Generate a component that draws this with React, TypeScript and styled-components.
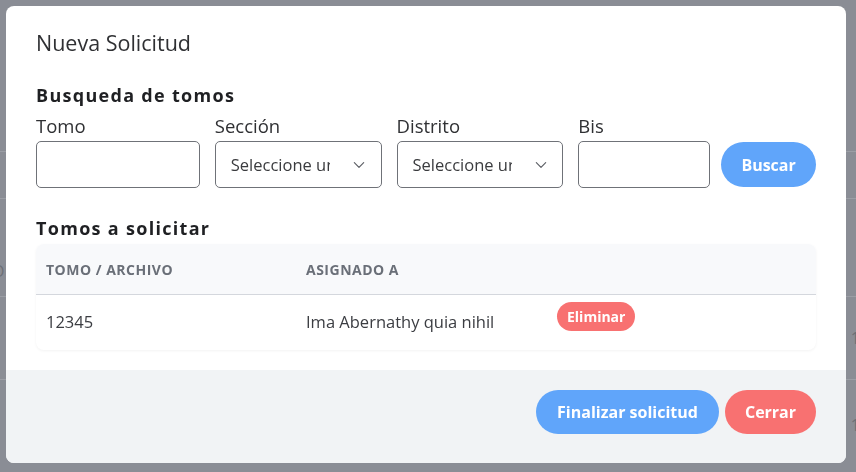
import React from "react";
import styled, { createGlobalStyle } from "styled-components";

const Global = createGlobalStyle`
  html, body { margin: 0; padding: 0; }
  body {
    background: #8a8d95;
    font-family: "Open Sans", "Noto Sans", sans-serif;
    width: 856px;
    height: 472px;
    overflow: hidden;
  }
  * { box-sizing: border-box; }
`;

const Page = styled.div`
  display: flex;
  flex-direction: column;
  padding-top: 151px;
`;

const PageRow = styled.div<{ $h: number; $pt?: number }>`
  height: ${(p) => p.$h}px;
  padding-top: ${(p) => p.$pt ?? 0}px;
  border-top: 1px solid #9b9ea5;
  display: flex;
  align-items: center;
  justify-content: space-between;
  color: #6c6f76;
  font-size: 16px;
`;

const EdgeText = styled.span<{ $side: "left" | "right" }>`
  margin-${(p) => p.$side}: ${(p) => (p.$side === "left" ? -8 : -4)}px;
`;

const Overlay = styled.div`
  position: fixed;
  inset: 0;
  padding: 6px;
  display: flex;
  align-items: flex-start;
`;

const Modal = styled.div`
  width: 840px;
  background: #ffffff;
  border-radius: 8px;
  overflow: hidden;
  display: flex;
  flex-direction: column;
`;

const Body = styled.div`
  padding: 23px 30px 20px;
  display: flex;
  flex-direction: column;
`;

const Title = styled.h2`
  margin: 0;
  font-size: 21.5px;
  line-height: 28px;
  font-weight: 400;
  color: #2f3033;
`;

const SectionHeading = styled.h3<{ $mt: number }>`
  margin: ${(p) => p.$mt}px 0 0;
  font-size: 18px;
  line-height: 24px;
  font-weight: 700;
  letter-spacing: 1.3px;
  color: #1f2023;
`;

const SearchRow = styled.div`
  margin-top: 7px;
  display: flex;
  align-items: flex-end;
  gap: 15px;
`;

const Field = styled.div<{ $w: number }>`
  width: ${(p) => p.$w}px;
  display: flex;
  flex-direction: column;
  gap: 3px;
`;

const Label = styled.label`
  font-size: 18.5px;
  line-height: 24px;
  color: #2f3033;
`;

const TextInput = styled.input`
  height: 47px;
  width: 100%;
  border: 1px solid #6f7278;
  border-radius: 5px;
  background: #fff;
  font: inherit;
  padding: 0 12px;
`;

const SelectBox = styled.div`
  height: 47px;
  width: 100%;
  border: 1px solid #6f7278;
  border-radius: 5px;
  background: #fff;
  display: flex;
  align-items: center;
  padding-left: 15px;
  gap: 22px;
`;

const SelectText = styled.span`
  width: 99px;
  overflow: hidden;
  white-space: nowrap;
  font-size: 16.5px;
  color: #3a3b3e;
`;

const Pill = styled.button<{ $tone: "blue" | "red"; $h: number; $w: number }>`
  height: ${(p) => p.$h}px;
  width: ${(p) => p.$w}px;
  padding: 0;
  border: none;
  border-radius: 999px;
  background: ${(p) => (p.$tone === "blue" ? "#60a5fa" : "#f87171")};
  color: #fff;
  font-family: inherit;
  font-size: 16px;
  font-weight: 700;
  white-space: nowrap;
`;

const SearchButton = styled(Pill)`
  margin-left: -4px;
  margin-bottom: 1px;
`;

const Table = styled.div`
  margin-top: 4px;
  border-radius: 8px;
  box-shadow: 0 1px 3px rgba(0, 0, 0, 0.05);
  display: flex;
  flex-direction: column;
`;

const Grid = styled.div`
  display: grid;
  grid-template-columns: 260px 261px 1fr;
`;

const HeadRow = styled(Grid)`
  height: 51px;
  background: #f8f9fb;
  border-radius: 8px 8px 0 0;
  border-bottom: 1px solid #d4d7dd;
  align-items: center;
`;

const HeadCell = styled.div`
  padding-left: 10px;
  font-size: 14px;
  font-weight: 700;
  letter-spacing: 0.5px;
  color: #6a6f78;
  text-transform: uppercase;
`;

const DataRow = styled(Grid)`
  height: 55px;
  align-items: start;
`;

const Cell = styled.div`
  padding: 16px 0 0 10px;
  font-size: 16.5px;
  line-height: 22px;
  color: #3b3d42;
`;

const BadgeCell = styled.div`
  padding-top: 7px;
`;

const Badge = styled.span`
  display: inline-flex;
  align-items: center;
  height: 29px;
  padding: 0 10px;
  border-radius: 999px;
  background: #f87171;
  color: #fff;
  font-size: 14px;
  font-weight: 700;
`;

const Footer = styled.div`
  background: #f1f3f5;
  padding: 20px 30px 29px;
  display: flex;
  justify-content: flex-end;
  gap: 6px;
`;

const Chevron = () => (
  <svg width="14" height="14" viewBox="0 0 24 24" fill="none" stroke="#5c5f65" strokeWidth="2" strokeLinecap="round" strokeLinejoin="round">
    <path d="M4 8l8 8 8-8" />
  </svg>
);

export default function App() {
  return (
    <>
      <Global />
      <Page>
        <PageRow $h={47} />
        <PageRow $h={98} $pt={46}>
          <EdgeText $side="left">O</EdgeText>
        </PageRow>
        <PageRow $h={83}>
          <span />
          <EdgeText $side="right">1</EdgeText>
        </PageRow>
        <PageRow $h={90}>
          <span />
          <EdgeText $side="right">1</EdgeText>
        </PageRow>
      </Page>
      <Overlay>
        <Modal>
          <Body>
            <Title>Nueva Solicitud</Title>
            <SectionHeading $mt={26}>Busqueda de tomos</SectionHeading>
            <SearchRow>
              <Field $w={164}>
                <Label>Tomo</Label>
                <TextInput />
              </Field>
              <Field $w={167}>
                <Label>Sección</Label>
                <SelectBox>
                  <SelectText>Seleccione una</SelectText>
                  <Chevron />
                </SelectBox>
              </Field>
              <Field $w={167}>
                <Label>Distrito</Label>
                <SelectBox>
                  <SelectText>Seleccione una</SelectText>
                  <Chevron />
                </SelectBox>
              </Field>
              <Field $w={132}>
                <Label>Bis</Label>
                <TextInput />
              </Field>
              <SearchButton $tone="blue" $h={45} $w={95}>
                Buscar
              </SearchButton>
            </SearchRow>
            <SectionHeading $mt={28}>Tomos a solicitar</SectionHeading>
            <Table>
              <HeadRow>
                <HeadCell>Tomo / Archivo</HeadCell>
                <HeadCell>Asignado a</HeadCell>
                <div />
              </HeadRow>
              <DataRow>
                <Cell>12345</Cell>
                <Cell>Ima Abernathy quia nihil</Cell>
                <BadgeCell>
                  <Badge>Eliminar</Badge>
                </BadgeCell>
              </DataRow>
            </Table>
          </Body>
          <Footer>
            <Pill $tone="blue" $h={44} $w={183}>
              Finalizar solicitud
            </Pill>
            <Pill $tone="red" $h={44} $w={91}>
              Cerrar
            </Pill>
          </Footer>
        </Modal>
      </Overlay>
    </>
  );
}
